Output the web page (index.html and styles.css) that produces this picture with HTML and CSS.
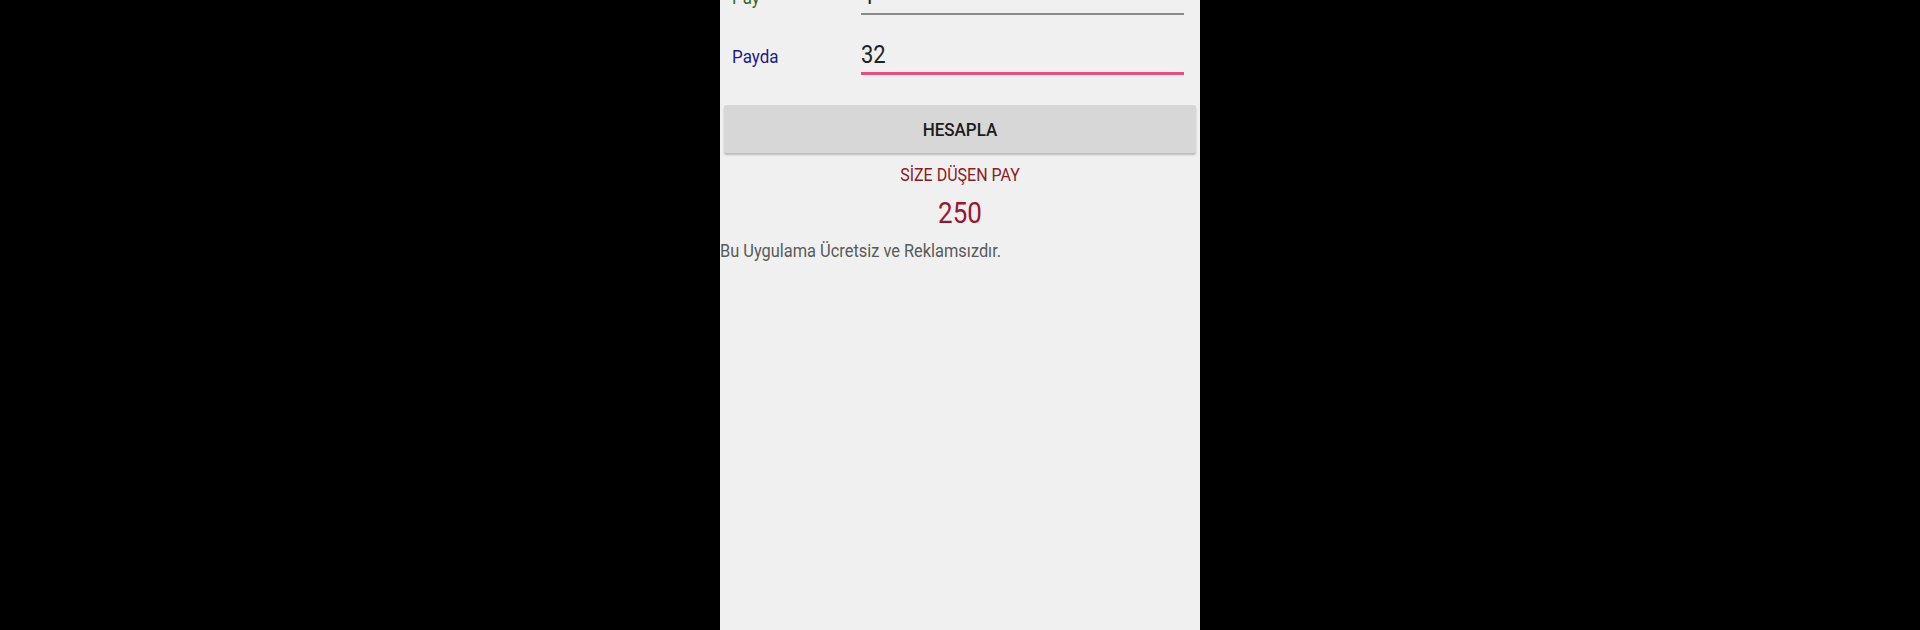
FILE: index.html
```html
<!DOCTYPE html>
<html lang="tr">
<head>
<meta charset="utf-8">
<title>Pay Hesaplama</title>
<link rel="stylesheet" href="styles.css">
</head>
<body>
<div class="stage">
  <main class="phone">
    <div class="form">
      <div class="row">
        <span class="label label-pay"><span class="tall">Pay</span></span>
        <div class="field"><span class="tall">4</span></div>
      </div>
      <div class="row">
        <span class="label label-payda"><span class="tall">Payda</span></span>
        <div class="field focused"><span class="tall">32</span></div>
      </div>
    </div>
    <button class="btn" type="button"><span class="tall">HESAPLA</span></button>
    <div class="result-title"><span class="tall">SİZE DÜŞEN PAY</span></div>
    <div class="result-value"><span class="tall">250</span></div>
    <p class="note"><span class="tall">Bu Uygulama Ücretsiz ve Reklamsızdır.</span></p>
  </main>
</div>
</body>
</html>
```

FILE: styles.css
```css
html, body {
  margin: 0;
  padding: 0;
  background: #000;
  height: 630px;
  overflow: hidden;
}

.stage {
  display: flex;
  justify-content: center;
  height: 630px;
}

.phone {
  width: 480px;
  height: 630px;
  background: #f0f0f0;
  overflow: hidden;
  font-family: Roboto, "Noto Sans", sans-serif;
  display: flex;
  flex-direction: column;
}

/* the source screenshot is stretched vertically: glyphs are taller than wide */
.tall {
  display: inline-block;
  transform: scaleY(1.13);
  transform-origin: 50% 50%;
}

.form {
  margin-top: -19px;
  padding: 0 16px 0 12px;
}

.row {
  display: flex;
  align-items: baseline;
}

.row + .row {
  margin-top: 25px;
}

.label {
  width: 129px;
  flex: none;
  font-size: 17px;
}

.label-pay {
  color: #2f6a24;
}

.label-payda {
  color: #231a8c;
}

.field {
  flex: 1;
  font-size: 22px;
  line-height: 30px;
  color: #222;
  padding-bottom: 2px;
  border-bottom: 2px solid #8a8a8a;
}

.field.focused {
  border-bottom: 3px solid #ea4d84;
}

.btn {
  margin: 30px 4px 0;
  height: 48px;
  border: none;
  border-radius: 2px;
  background: #d6d7d6;
  box-shadow: 0 2px 2px rgba(0, 0, 0, 0.22);
  font-family: Roboto, "Noto Sans", sans-serif;
  font-weight: 500;
  font-size: 17px;
  color: #1c1c1c;
  padding: 0;
}

.result-title {
  margin-top: 12px;
  text-align: center;
  font-size: 16px;
  line-height: 20px;
  color: #8b1c24;
}

.result-value {
  margin-top: 12px;
  text-align: center;
  font-size: 26px;
  line-height: 32px;
  color: #9b1530;
}

.note {
  margin: 12px 0 0;
  font-size: 16.4px;
  line-height: 20px;
  color: #5a5a5a;
}
```
